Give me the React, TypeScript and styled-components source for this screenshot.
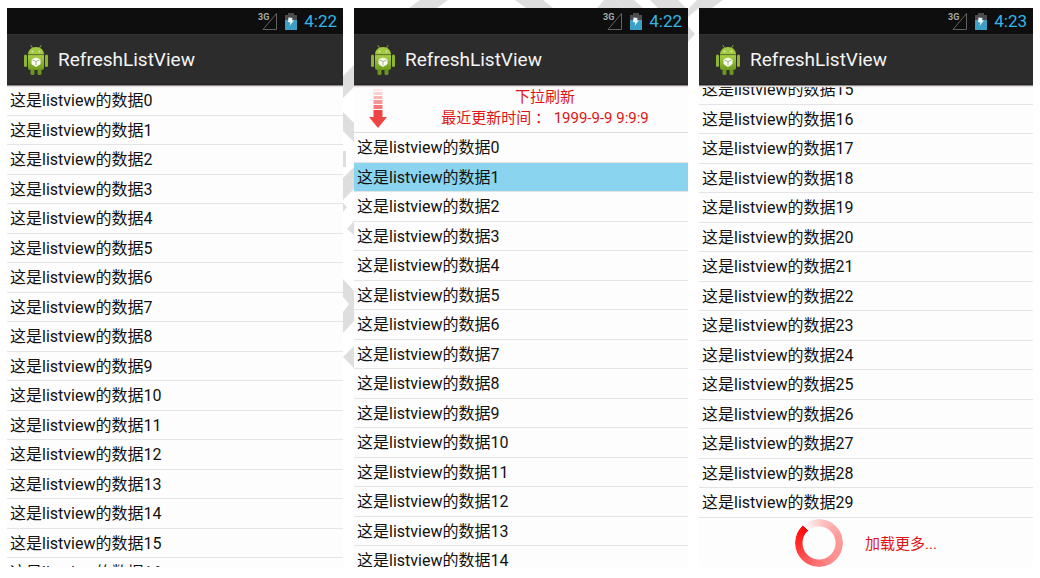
import React from "react";
import styled, { createGlobalStyle } from "styled-components";

const GlobalStyle = createGlobalStyle`
  * { box-sizing: border-box; }
  body {
    margin: 0;
    background: #fff;
    font-family: Roboto, "Noto Sans CJK SC", sans-serif;
  }
`;

const Page = styled.main`
  position: relative;
  display: grid;
  grid-template-columns: 336fr 334fr 334fr;
  gap: 11px;
  height: 100vh;
  padding: 8px 7px 11px;
  overflow: hidden;
`;

const Watermark = styled.svg`
  position: absolute;
  top: 0;
  left: 0;
  fill: #dedede;
`;

const Phone = styled.section`
  position: relative;
  display: flex;
  flex-direction: column;
  min-width: 0;
  min-height: 0;
  overflow: hidden;
  background: #fdfdfd;
`;

const StatusBar = styled.div`
  display: flex;
  flex: none;
  align-items: center;
  justify-content: flex-end;
  gap: 7px;
  height: 26px;
  padding-right: 6px;
  background: #0e0e0e;
`;

const Clock = styled.time`
  color: #33b5e5;
  font-size: 17px;
  line-height: 26px;
`;

const ActionBar = styled.header`
  display: flex;
  flex: none;
  align-items: center;
  gap: 9px;
  height: 52px;
  padding-left: 16px;
  background: #2c2c2c;
  border-top: 1px solid #323232;
  border-bottom: 1px solid #8f8989;
  box-shadow: inset 0 -1px #222, 0 1px 1px #e4dede;
  z-index: 1;
`;

const Title = styled.h1`
  margin: 0;
  color: #f4f4f4;
  font-size: 19px;
  font-weight: 400;
  line-height: 24px;
`;

const Viewport = styled.div<{ $atEnd?: boolean }>`
  display: flex;
  flex: 1;
  flex-direction: column;
  justify-content: ${(p) => (p.$atEnd ? "flex-end" : "flex-start")};
  min-height: 0;
  overflow: hidden;
`;

const List = styled.ul`
  flex: none;
  margin: 0;
  padding: 0;
  list-style: none;
`;

const Row = styled.li<{ $selected?: boolean }>`
  height: 29px;
  padding-left: 3px;
  border-bottom: 1px solid #e4e4e4;
  background: ${(p) => (p.$selected ? "#8ad4ef" : "transparent")};
  color: #111;
  font-size: 16px;
  line-height: 29px;
  white-space: nowrap;

  &:nth-child(odd) {
    height: 30px;
  }
`;

const RefreshHeader = styled.div`
  display: flex;
  flex: none;
  height: 47px;
  border-bottom: 1px solid #dcdcdc;
`;

const ArrowCell = styled.div`
  display: flex;
  flex: none;
  align-items: center;
  justify-content: center;
  width: 48px;
`;

const RefreshText = styled.div`
  flex: 1;
  padding-top: 1px;
  color: #e01414;
  font-size: 15px;
  line-height: 21px;
  text-align: center;

  p {
    margin: 0;
  }
`;

const Footer = styled.div`
  display: flex;
  flex: none;
  align-items: center;
  justify-content: center;
  gap: 22px;
  height: 49px;
  color: #e01414;
  font-size: 15px;
`;

const Spinner = styled.div`
  width: 48px;
  height: 48px;
  border-radius: 50%;
  background: conic-gradient(from -42deg, #fff 0deg, #fdc4c4 50deg, #ff9c9c 110deg, #ff8f8f 180deg, #ff6a6a 240deg, #ff2a2a 310deg, #ff0808 360deg);
  mask: radial-gradient(circle, transparent 16px, #000 17px);
`;

const SignalIcon = () => (
  <svg width="20" height="20" viewBox="0 0 20 20" aria-hidden="true">
    <text x="0" y="9" fill="#a8a8a8" fontSize="9" fontWeight="700">3G</text>
    <path d="M18.5 2.5V18.5H5L18.5 2.5Z" fill="none" stroke="#626262" />
  </svg>
);

const BatteryIcon = () => (
  <svg width="12" height="17" viewBox="0 0 12 17" aria-hidden="true">
    <path d="M3 0H9V2H12V7H0V2H3Z" fill="#4a4d50" />
    <path d="M0 7H12V17H0Z" fill="#3c9fc6" />
    <path d="M3.500 4.500L7.500 5L7 7.500L9 7.200L4.500 13L5.500 9.500L3 9Z" fill="#f2fafc" />
  </svg>
);

const AndroidIcon = () => (
  <svg width="26" height="32" viewBox="0 0 26 32" aria-hidden="true">
    <defs>
      <linearGradient id="droid" x1="0" y1="0" x2="0" y2="1">
        <stop offset="0" stopColor="#a9cf45" />
        <stop offset="1" stopColor="#6f9a1c" />
      </linearGradient>
    </defs>
    <path d="M8 1.500L9.500 4M18 1.500L16.500 4" stroke="#86a83a" strokeWidth="1" strokeLinecap="round" />
    <path d="M5 10.500C5 6 8.500 3 13 3S21 6 21 10.500Z" fill="#a3c940" />
    <circle cx="9.500" cy="7.500" r="0.900" fill="#dce8b4" />
    <circle cx="16.500" cy="7.500" r="0.900" fill="#dce8b4" />
    <path d="M5 11H21V23.500Q21 26 18.500 26H7.500Q5 26 5 23.500Z" fill="url(#droid)" />
    <path d="M5 10.800H21" stroke="#5f7c22" strokeWidth="0.600" />
    <rect x="1" y="10.500" width="3" height="12.500" rx="1.500" fill="#8db52f" />
    <rect x="22" y="10.500" width="3" height="12.500" rx="1.500" fill="#8db52f" />
    <rect x="7.500" y="25" width="4" height="6" rx="1.500" fill="#6d941f" />
    <rect x="14.500" y="25" width="4" height="6" rx="1.500" fill="#6d941f" />
    <path d="M13 14L17 15.500V20L13 22.500L9 20V15.500Z" fill="#fff" stroke="#f4f7e6" strokeLinejoin="round" />
    <path d="M9.500 16L13 17.500L16.500 16M13 17.500V21.500" fill="none" stroke="#a3b27c" />
  </svg>
);

const PullArrow = () => (
  <svg width="18" height="40" viewBox="0 0 18 40" aria-hidden="true">
    <path d="M4.500 0H13.500V2H4.500Z" fill="#fde3e3" />
    <path d="M4.500 3H13.500V6H4.500Z" fill="#fbd0d0" />
    <path d="M4.500 7H13.500V10H4.500Z" fill="#f9b8b8" />
    <path d="M4.500 11H13.500V15H4.500Z" fill="#f69898" />
    <path d="M4.500 16H13.500V20H4.500Z" fill="#f47878" />
    <path d="M4.500 21H13.500V28H18L9 39L0 28H4.500Z" fill="#ef4444" />
  </svg>
);

const watermarkShapes = [
  "M420 0H448L437 8H409Z",
  "M515 0H543L553 8H526Z",
  "M604 0H616L623 8H597Z",
  "M616 0H634L643 8H623Z",
  "M650 0H678L686 8H658Z",
  "M697 0H723L712 8H699L688 17V9Z",
  "M688 26L695 34L688 42Z",
  "M343 76L354 65V87L343 98Z",
  "M343 112L354 123V142L343 131Z",
  "M343 151H346V167H343Z",
  "M343 178L354 167V189L343 200Z",
  "M343 203L347 207L343 212Z",
  "M347 229L354 221V235Z",
  "M343 279L354 291V321L343 333V312L349 304L343 297Z",
  "M343 357L354 346V368Z",
];

interface ScreenProps {
  time: string;
  first: number;
  last: number;
  selected?: number;
  atEnd?: boolean;
  header?: React.ReactNode;
  footer?: React.ReactNode;
}

function Screen({ time, first, last, selected, atEnd, header, footer }: ScreenProps) {
  const items = Array.from({ length: last - first + 1 }, (_, i) => first + i);
  return (
    <Phone>
      <StatusBar>
        <SignalIcon />
        <BatteryIcon />
        <Clock>{time}</Clock>
      </StatusBar>
      <ActionBar>
        <AndroidIcon />
        <Title>RefreshListView</Title>
      </ActionBar>
      <Viewport $atEnd={atEnd}>
        {header}
        <List>
          {items.map((n) => (
            <Row key={n} $selected={n === selected}>{`这是listview的数据${n}`}</Row>
          ))}
        </List>
        {footer}
      </Viewport>
    </Phone>
  );
}

export default function App() {
  return (
    <>
      <GlobalStyle />
      <Page>
        <Watermark width="1040" height="578" viewBox="0 0 1040 578" aria-hidden="true">
          {watermarkShapes.map((d) => (
            <path key={d} d={d} />
          ))}
        </Watermark>
        <Screen time="4:22" first={0} last={16} />
        <Screen
          time="4:22"
          first={0}
          last={14}
          selected={1}
          header={
            <RefreshHeader>
              <ArrowCell>
                <PullArrow />
              </ArrowCell>
              <RefreshText>
                <p>下拉刷新</p>
                <p>最近更新时间 ： 1999-9-9 9:9:9</p>
              </RefreshText>
            </RefreshHeader>
          }
        />
        <Screen
          time="4:23"
          first={15}
          last={29}
          atEnd
          footer={
            <Footer>
              <Spinner />
              <span>加载更多...</span>
            </Footer>
          }
        />
      </Page>
    </>
  );
}
